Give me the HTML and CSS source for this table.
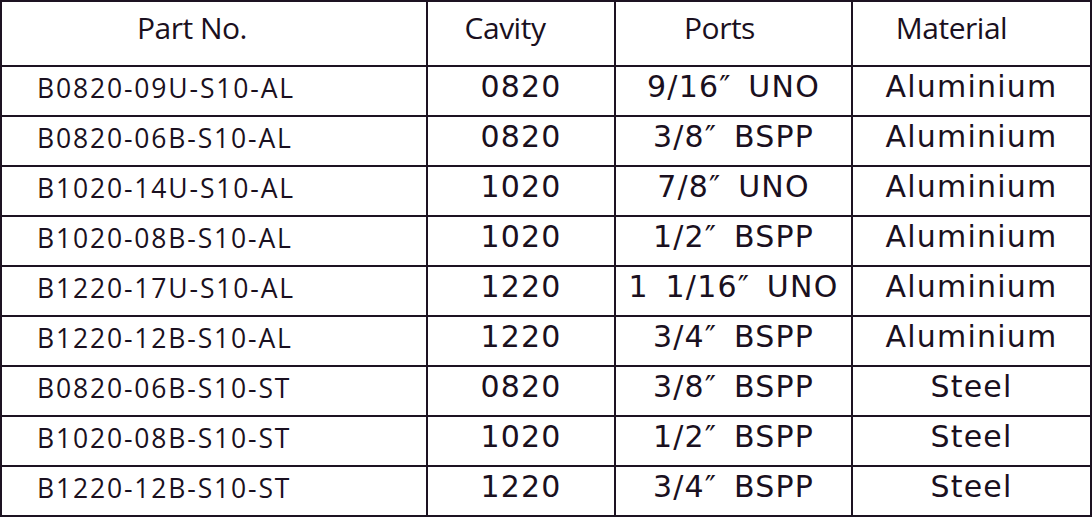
FILE: index.html
```html
<!DOCTYPE html>
<html>
<head>
<meta charset="utf-8">
<link rel="stylesheet" href="styles.css">
</head>
<body>
<table class="parts">
  <colgroup>
    <col class="c1"><col class="c2"><col class="c3"><col class="c4">
  </colgroup>
  <thead>
    <tr>
      <th class="h-part">Part No.</th>
      <th class="h-cavity">Cavity</th>
      <th class="h-ports">Ports</th>
      <th class="h-material">Material</th>
    </tr>
  </thead>
  <tbody>
    <tr><td class="part">B0820-09U-S10-AL</td><td class="val">0820</td><td class="val">9/16″ UNO</td><td class="val">Aluminium</td></tr>
    <tr><td class="part">B0820-06B-S10-AL</td><td class="val">0820</td><td class="val">3/8″ BSPP</td><td class="val">Aluminium</td></tr>
    <tr><td class="part">B1020-14U-S10-AL</td><td class="val">1020</td><td class="val">7/8″ UNO</td><td class="val">Aluminium</td></tr>
    <tr><td class="part">B1020-08B-S10-AL</td><td class="val">1020</td><td class="val">1/2″ BSPP</td><td class="val">Aluminium</td></tr>
    <tr><td class="part">B1220-17U-S10-AL</td><td class="val">1220</td><td class="val">1 1/16″ UNO</td><td class="val">Aluminium</td></tr>
    <tr><td class="part">B1220-12B-S10-AL</td><td class="val">1220</td><td class="val">3/4″ BSPP</td><td class="val">Aluminium</td></tr>
    <tr><td class="part">B0820-06B-S10-ST</td><td class="val">0820</td><td class="val">3/8″ BSPP</td><td class="val">Steel</td></tr>
    <tr><td class="part">B1020-08B-S10-ST</td><td class="val">1020</td><td class="val">1/2″ BSPP</td><td class="val">Steel</td></tr>
    <tr><td class="part">B1220-12B-S10-ST</td><td class="val">1220</td><td class="val">3/4″ BSPP</td><td class="val">Steel</td></tr>
  </tbody>
</table>
</body>
</html>
```
FILE: styles.css
```css
html, body {
  margin: 0;
  padding: 0;
  background: #ffffff;
}

.parts {
  border-collapse: separate;
  border-spacing: 0;
  table-layout: fixed;
  width: 1092px;
  border-left: 2px solid #1d1322;
  border-top: 2px solid #1d1322;
  color: #1a1020;
}

.c1 { width: 426px; }
.c2 { width: 188px; }
.c3 { width: 237px; }
.c4 { width: 239px; }

.parts th,
.parts td {
  border-right: 2px solid #1d1322;
  border-bottom: 2px solid #1d1322;
  padding: 0;
  white-space: nowrap;
  box-sizing: border-box;
  vertical-align: top;
}

.parts th {
  height: 65px;
  font-family: "Open Sans", "Liberation Sans", sans-serif;
  font-weight: 400;
  font-size: 30px;
  letter-spacing: -0.5px;
  line-height: 30px;
  text-align: center;
  padding-top: 11px;
}

.parts .h-part { padding-right: 44px; }
.parts .h-cavity { padding-right: 32px; }
.parts .h-ports { padding-right: 28px; }
.parts .h-material { padding-right: 40px; }

.parts td {
  height: 50px;
}

.parts .part {
  font-family: "Open Sans", "Liberation Sans", sans-serif;
  font-size: 26.5px;
  letter-spacing: 1.85px;
  line-height: 30px;
  padding-top: 6px;
  padding-left: 35px;
  text-align: left;
}

.parts .val {
  font-family: "DejaVu Sans", Verdana, sans-serif;
  font-size: 30px;
  letter-spacing: 1.2px;
  word-spacing: 6px;
  line-height: 30px;
  padding-top: 5px;
  text-align: center;
}
```
